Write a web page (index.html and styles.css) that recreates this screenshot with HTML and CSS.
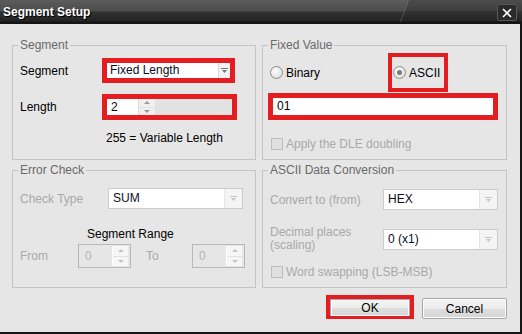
FILE: index.html
```html
<!DOCTYPE html>
<html>
<head>
	<title>Segment Setup</title>
	<meta charset="utf-8">
	<link rel="stylesheet" href="styles.css">
</head>
<body>
	<div class="dlg">
		<div class="titlebar">
			<span class="titlebar__text">Segment Setup</span>
			<span class="titlebar__close">
				<svg width="12" height="10" viewBox="0 0 12 10"><path d="M2 1l8 8M10 1l-8 8" stroke="#fff" stroke-width="1.6"/></svg>
			</span>
		</div>

		<div class="dlg__body">
			<div class="groups">

				<fieldset class="group">
					<legend>Segment</legend>
					<div class="seg">
						<span class="lbl">Segment</span>
						<div class="mark mark_seg">
							<div class="combo combo_flat">
								<span class="combo__text">Fixed Length</span>
								<span class="combo__btn"><svg width="7" height="5" viewBox="0 0 7 5"><path d="M0 0h7v1H0zM1 2h5L3.5 5z" fill="#777"/></svg></span>
							</div>
						</div>
						<span class="lbl">Length</span>
						<div class="mark mark_len">
							<div class="spin spin_flat">
								<span class="spin__text">2</span>
								<span class="spin__btns"><i class="up"></i><i class="down"></i></span>
							</div>
						</div>
						<span></span>
						<span class="seg__note">255 = Variable Length</span>
					</div>
				</fieldset>

				<fieldset class="group">
					<legend>Fixed Value</legend>
					<div class="fv__radios">
						<label class="radio fv__binary"><span class="radio__dot"></span>Binary</label>
						<div class="mark mark_ascii">
							<label class="radio"><span class="radio__dot radio__dot_on"></span>ASCII</label>
						</div>
					</div>
					<div class="mark mark_text">
						<div class="field">01</div>
					</div>
					<label class="check fv__check"><span class="check__box"></span>Apply the DLE doubling</label>
				</fieldset>

				<fieldset class="group">
					<legend>Error Check</legend>
					<div class="row ec__row">
						<span class="lbl lbl_off ec__lbl">Check Type</span>
						<div class="combo ec__combo">
							<span class="combo__text">SUM</span>
							<span class="combo__btn"><svg width="7" height="5" viewBox="0 0 7 5"><path d="M0 0h7v1H0zM1 2h5L3.5 5z" fill="#c4c4c4"/></svg></span>
						</div>
					</div>
					<div class="ec__range">Segment Range</div>
					<div class="row ec__from">
						<span class="lbl lbl_off ec__from_lbl">From</span>
						<div class="spin spin_off ec__spin">
							<span class="spin__text">0</span>
							<span class="spin__btns"><i class="up"></i><i class="down"></i></span>
						</div>
						<span class="lbl lbl_off ec__to_lbl">To</span>
						<div class="spin spin_off ec__spin">
							<span class="spin__text">0</span>
							<span class="spin__btns"><i class="up"></i><i class="down"></i></span>
						</div>
					</div>
				</fieldset>

				<fieldset class="group">
					<legend>ASCII Data Conversion</legend>
					<div class="row adc__row1">
						<span class="lbl lbl_off adc__lbl">Convert to (from)</span>
						<div class="combo adc__combo">
							<span class="combo__text">HEX</span>
							<span class="combo__btn"><svg width="7" height="5" viewBox="0 0 7 5"><path d="M0 0h7v1H0zM1 2h5L3.5 5z" fill="#c4c4c4"/></svg></span>
						</div>
					</div>
					<div class="row adc__row2">
						<span class="lbl lbl_off adc__lbl adc__lbl_two">Decimal places<br>(scaling)</span>
						<div class="combo adc__combo">
							<span class="combo__text">0 (x1)</span>
							<span class="combo__btn"><svg width="7" height="5" viewBox="0 0 7 5"><path d="M0 0h7v1H0zM1 2h5L3.5 5z" fill="#c4c4c4"/></svg></span>
						</div>
					</div>
					<label class="check adc__check"><span class="check__box"></span>Word swapping (LSB-MSB)</label>
				</fieldset>

			</div>

			<div class="buttons">
				<div class="mark mark_ok"><button class="btn btn_ok" type="button">OK</button></div>
				<button class="btn btn_cancel" type="button">Cancel</button>
			</div>
		</div>
	</div>
</body>
</html>
```

FILE: styles.css
```css
* {
	box-sizing: border-box;
}
body {
	margin: 0;
	font: 12px/14px "Liberation Sans", Arial, sans-serif;
	color: #000;
	background: #e6e6e6;
}
.dlg {
	width: 522px;
	height: 334px;
	background: #e6e6e6;
}

/* title bar */
.titlebar {
	position: relative;
	height: 24px;
	display: flex;
	align-items: flex-start;
	justify-content: space-between;
	padding: 0 5px 0 3px;
	background: linear-gradient(#5c5c5c 0, #4c4c4c 11px, #313131 12px, #242424 21px, #151515 22px, #151515 24px);
	overflow: hidden;
}
.titlebar:after {
	content: '';
	position: absolute;
	left: 408px;
	right: -10px;
	top: 0;
	height: 22px;
	border-left: 1px solid rgba(255,255,255,0.18);
	background: linear-gradient(rgba(0,0,0,0.18) 0, rgba(0,0,0,0.18) 12px, rgba(0,0,0,0) 12px);
	transform: skewX(-20deg);
	transform-origin: top left;
}
.titlebar__text {
	margin-top: 5px;
	font-weight: bold;
	font-size: 12px;
	color: #fff;
	text-shadow: 1px 1px 0 #000;
	letter-spacing: 0;
}
.titlebar__close {
	position: relative;
	z-index: 1;
	margin-top: 4px;
	width: 20px;
	height: 17px;
	border: 1px solid #595959;
	border-radius: 2px;
	background: #2a2a2a;
	display: flex;
	align-items: center;
	justify-content: center;
}

/* body */
.dlg__body {
	height: 310px;
	padding: 14px 0 0 12px;
	border-right: 2px solid #161616;
	border-bottom: 2px solid #161616;
}
.groups {
	display: grid;
	grid-template-columns: 244px 245px;
	grid-template-rows: 122px 125px;
	column-gap: 6px;
	row-gap: 3px;
}
.group {
	margin: 0;
	padding: 0;
	min-width: 0;
	border: 1px solid #c4c4c4;
}
.group legend {
	margin-left: 5px;
	padding: 0 2px;
	line-height: 14px;
	color: #6a6a6a;
}

.lbl {
	white-space: nowrap;
}
.lbl_off {
	color: #a9a9a9;
}
.row {
	display: flex;
	align-items: center;
}

/* red marks */
.mark {
	border: 5px solid #e41e20;
}
.mark_seg {
	width: 133px;
	height: 25px;
}
.mark_len {
	width: 135px;
	height: 26px;
}
.mark_ascii {
	width: 60px;
	height: 39px;
	border-width: 4px;
	display: flex;
	align-items: center;
	padding-left: 1px;
}
.mark_text {
	margin: 1px 0 0 5px;
	width: 230px;
	height: 27px;
}
.mark_ok {
	width: 88px;
	height: 24px;
	border-width: 4px;
	border-bottom-width: 3px;
}

/* combo box */
.combo {
	display: flex;
	height: 21px;
	border: 1px solid #cbcbcb;
	background: #fff;
}
.combo__text {
	flex: 1;
	padding-left: 4px;
	line-height: 19px;
	color: #0c0c24;
}
.combo__btn {
	width: 18px;
	border-left: 1px solid #e6e6e6;
	background: #f4f4f4;
	display: flex;
	align-items: center;
	justify-content: center;
}
.combo_flat {
	height: 100%;
	border: 0;
}
.combo_flat .combo__text {
	line-height: 15px;
	padding-left: 3px;
}
.combo_flat .combo__btn {
	flex: 0 0 12px;
	width: 12px;
	border-left: 1px solid #d8d8d8;
	background: #f2f2f2;
}

/* spin box */
.spin {
	display: flex;
	height: 24px;
	border: 1px solid #b8b8b8;
}
.spin__text {
	flex: 1;
	padding-left: 6px;
	line-height: 22px;
}
.spin__btns {
	width: 16px;
	margin: 1px 2px 1px 0;
	display: flex;
	flex-direction: column;
	background: #f6f6f6;
	border-left: 1px solid #fff;
}
.spin__btns i {
	flex: 1;
	display: flex;
	align-items: center;
	justify-content: center;
}
.spin__btns i:before {
	content: '';
	border-left: 3px solid transparent;
	border-right: 3px solid transparent;
}
.spin__btns .up:before {
	border-bottom: 3px solid #9a9a9a;
}
.spin__btns .down {
	border-top: 1px solid #e2e2e2;
}
.spin__btns .down:before {
	border-top: 3px solid #9a9a9a;
}
.spin_flat {
	height: 100%;
	border: 0;
	background: #e2e2e2;
}
.spin_flat .spin__text {
	flex: 0 0 31px;
	background: #fff;
	line-height: 16px;
	padding-left: 4px;
}
.spin_flat .spin__btns {
	flex: 0 0 17px;
	margin: 0;
	border-left: 1px solid #dcdcdc;
	background: #f0f0f0;
}
.spin_off .spin__text {
	color: #b4b4b4;
}
.spin_off .spin__btns .up:before {
	border-bottom-color: #c4c4c4;
}
.spin_off .spin__btns .down:before {
	border-top-color: #c4c4c4;
}

/* text field */
.field {
	height: 100%;
	background: #fff;
	padding-left: 4px;
	line-height: 17px;
}

/* radio */
.radio {
	display: flex;
	align-items: center;
	white-space: nowrap;
}
.radio__dot {
	width: 13px;
	height: 13px;
	margin-right: 3px;
	border: 1px solid #8c8c8c;
	border-radius: 50%;
	background: radial-gradient(circle at 40% 35%, #fdfdfd 0, #e2e2e2 70%, #d0d0d0 100%);
	display: flex;
	align-items: center;
	justify-content: center;
}
.radio__dot_on:before {
	content: '';
	width: 5px;
	height: 5px;
	border-radius: 50%;
	background: #7a7a7a;
}

/* check box */
.check {
	display: flex;
	align-items: center;
	color: #a9a9a9;
	white-space: nowrap;
}
.check__box {
	width: 12px;
	height: 12px;
	margin-right: 3px;
	border: 1px solid #bdbdbd;
	background: #e0e0e0;
}

/* segment group */
.seg {
	display: grid;
	grid-template-columns: 82px auto;
	row-gap: 11px;
	align-items: center;
	justify-items: start;
	padding: 6px 0 0 7px;
}
.seg__note {
	padding-left: 4px;
}

/* fixed value group */
.fv__radios {
	display: flex;
	align-items: center;
	margin-top: 1px;
	padding-left: 7px;
}
.fv__binary {
	width: 118px;
}
.fv__check {
	margin: 17px 0 0 8px;
}

/* error check group */
.ec__row {
	margin-top: 11px;
	padding-left: 7px;
}
.ec__lbl {
	width: 88px;
}
.ec__combo {
	width: 135px;
}
.ec__range {
	margin: 18px 0 0 74px;
}
.ec__from {
	margin-top: 3px;
	padding-left: 7px;
}
.ec__from_lbl {
	width: 58px;
}
.ec__to_lbl {
	width: 46px;
	padding-left: 15px;
	box-sizing: content-box;
}
.ec__spin {
	width: 53px;
}

/* ascii data conversion group */
.adc__row1 {
	margin-top: 12px;
	padding-left: 7px;
}
.adc__row2 {
	margin-top: 16px;
	padding-left: 7px;
}
.adc__lbl {
	width: 113px;
}
.adc__lbl_two {
	line-height: 13px;
}
.adc__combo {
	width: 115px;
}
.adc__check {
	margin: 13px 0 0 8px;
}

/* buttons */
.buttons {
	display: flex;
	align-items: flex-end;
	justify-content: flex-end;
	margin: 7px 13px 0 0;
	gap: 8px;
}
.btn {
	font: 12px "Liberation Sans", Arial, sans-serif;
	color: #000;
	border: 1px solid #a8a8a8;
	border-radius: 2px;
	background: linear-gradient(#f4f4f4 0, #ececec 50%, #dedede 51%, #d6d6d6 100%);
	box-shadow: inset 0 0 0 1px #fbfbfb;
	padding: 0;
	margin: 0;
}
.btn_ok {
	width: 100%;
	height: 100%;
	border-radius: 0;
	border-bottom: 0;
	line-height: 16px;
}
.btn_cancel {
	width: 85px;
	height: 21px;
}
```
